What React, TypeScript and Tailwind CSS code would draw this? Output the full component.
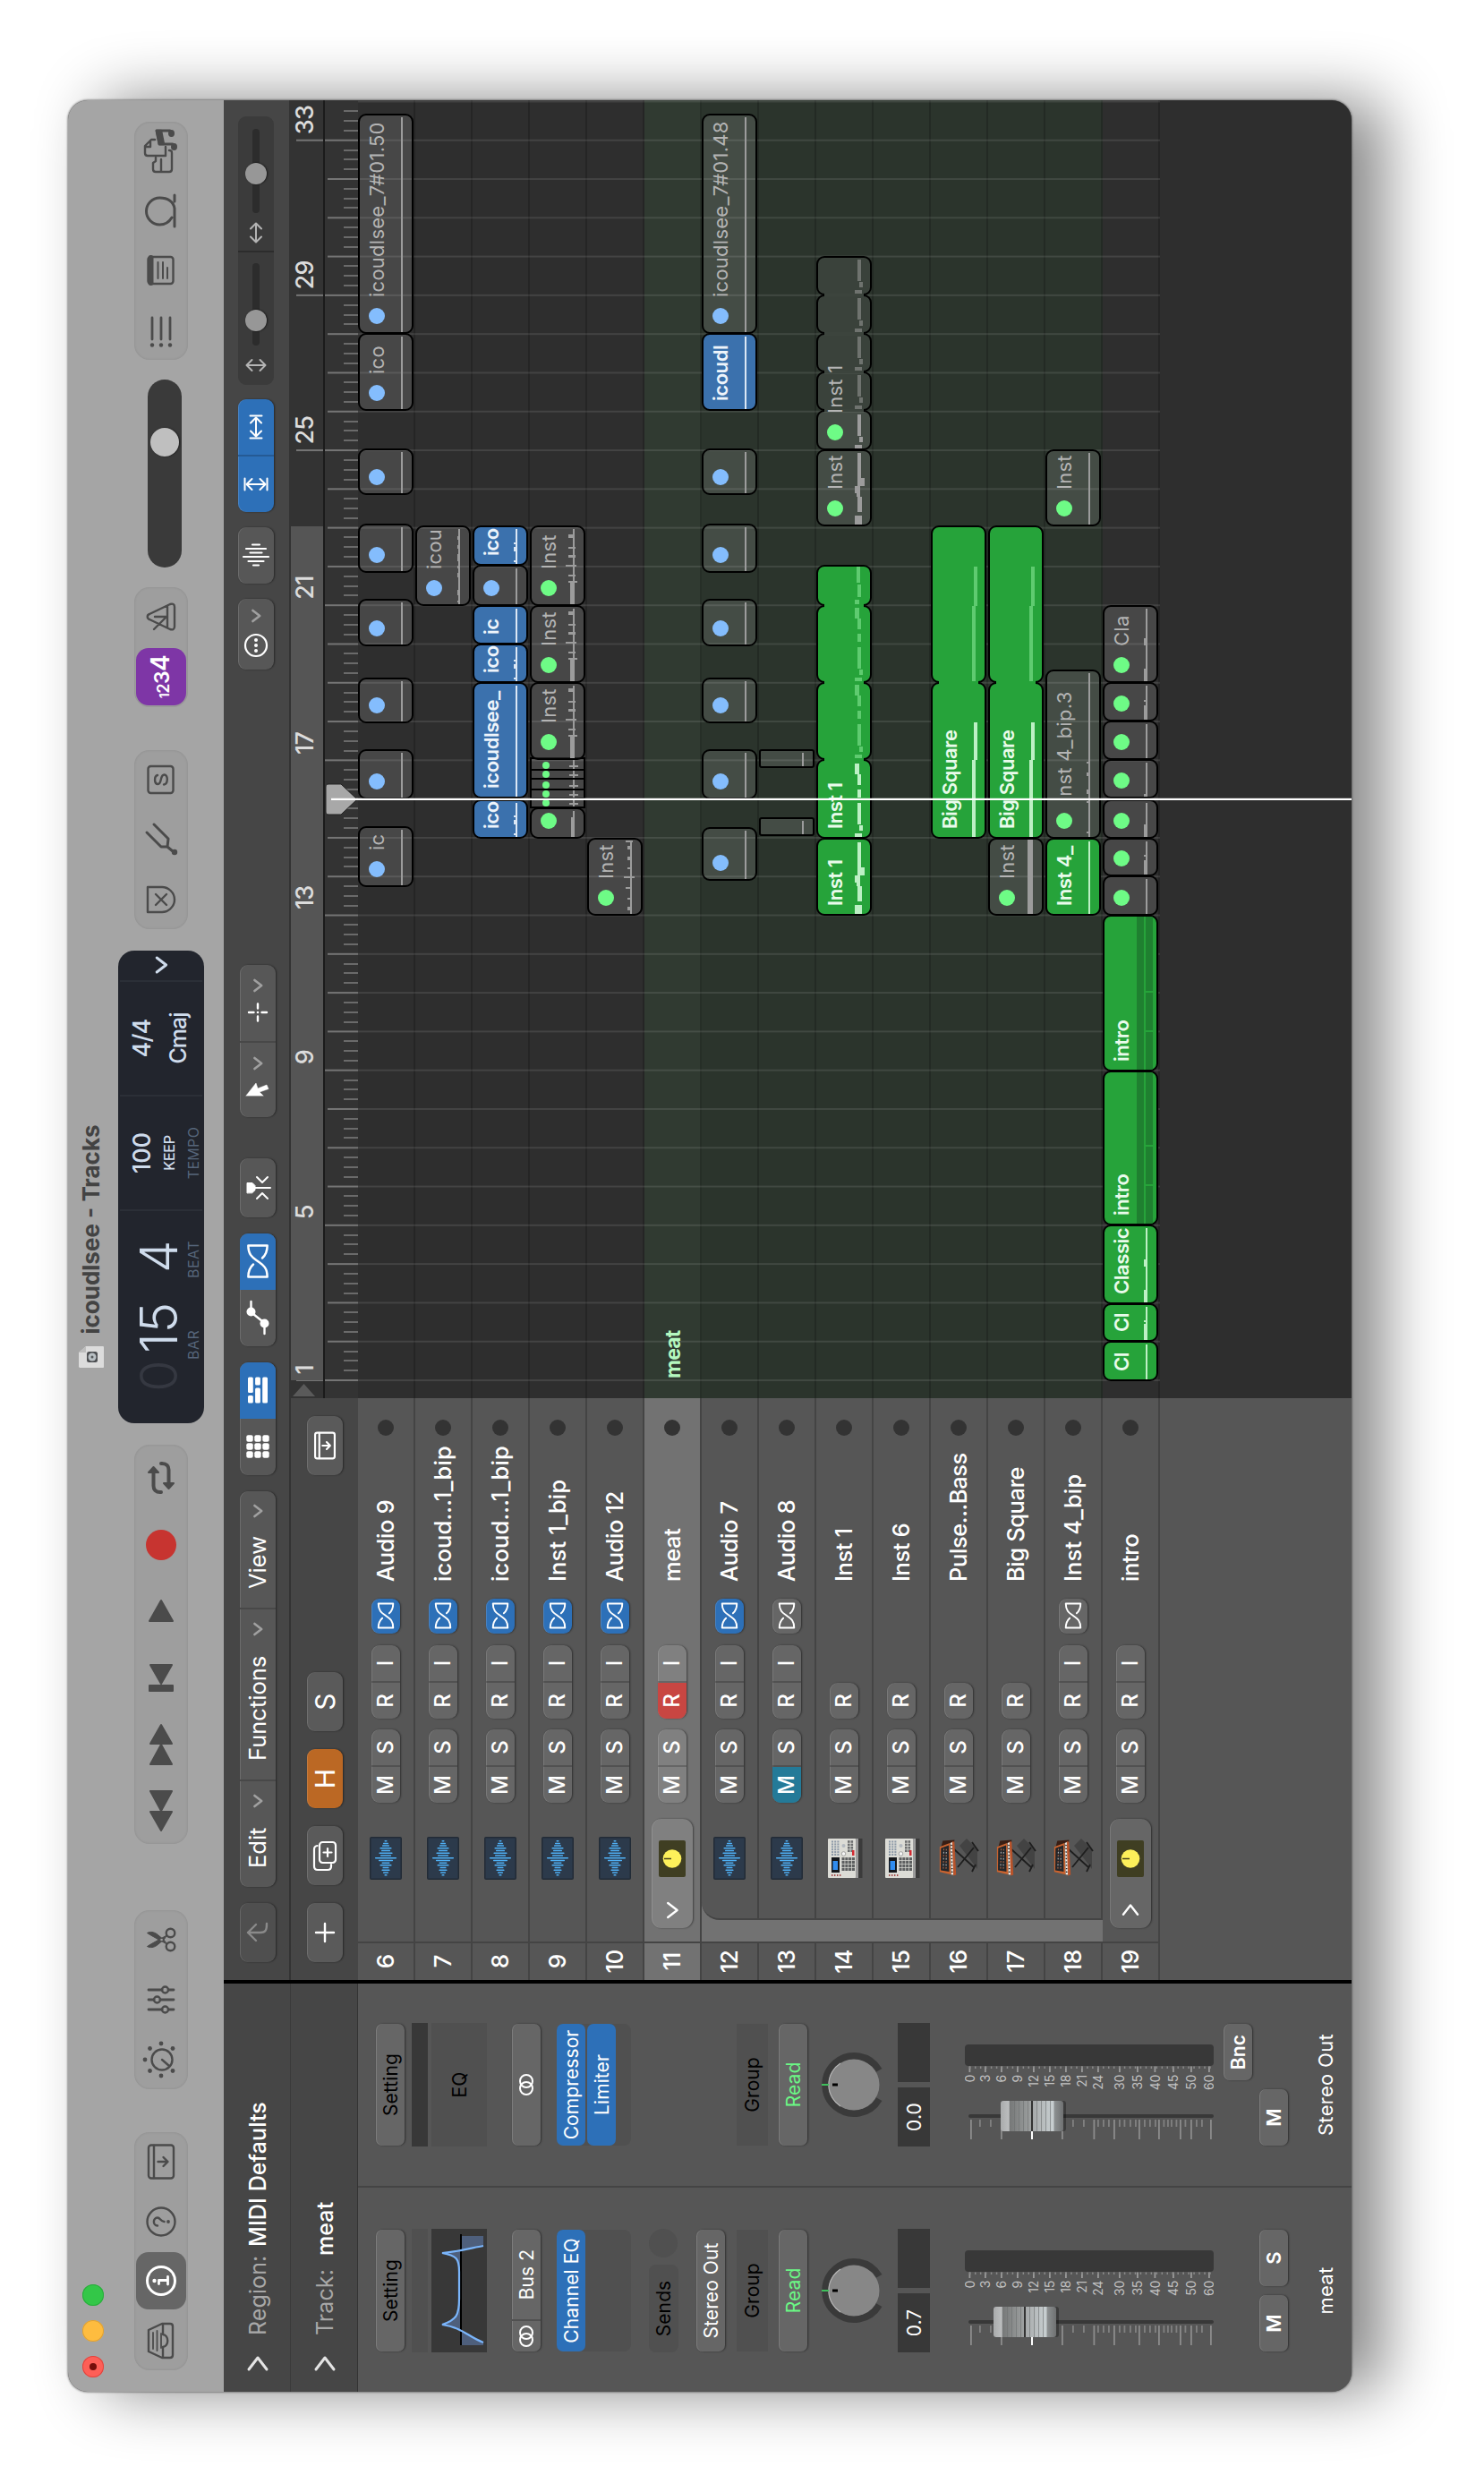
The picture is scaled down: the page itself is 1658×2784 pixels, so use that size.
import React from "react";
import type { ReactNode } from "react";

type Tone = "gray" | "blue" | "green";

const INK = "#4b4b4b";

/* ---------- icons ---------- */

function Icon({ size = 44, color = INK, sw = 2.4, children }: { size?: number; color?: string; sw?: number; children: ReactNode }) {
  return (
    <svg
      width={size}
      height={size}
      viewBox={`${-size / 2} ${-size / 2} ${size} ${size}`}
      fill="none"
      stroke={color}
      strokeWidth={sw}
      strokeLinecap="round"
      strokeLinejoin="round"
      className="shrink-0 overflow-visible"
    >
      {children}
    </svg>
  );
}

const Chevron = ({ dir = "down", color = "#a0a0a0", w = 7, sw = 2.6 }: { dir?: "down" | "right"; color?: string; w?: number; sw?: number }) => (
  <Icon size={w * 2 + 4} color={color} sw={sw}>
    {dir === "down" ? <path d={`M${-w} ${-w * 0.6}L0 ${w * 0.7}L${w} ${-w * 0.6}`} /> : <path d={`M${-w * 0.6} ${-w}L${w * 0.7} 0L${-w * 0.6} ${w}`} />}
  </Icon>
);

const FlexIcon = ({ s = 1 }: { s?: number }) => (
  <Icon size={34} color="#fff" sw={2}>
    <g transform={`scale(${s})`}>
      <path d="M-14 -8.5V8.5C-5 8.5 -3 4 0 0C3 -4 5 -8.5 14 -8.5V8.5C8 8.5 5 6.5 2.8 4M-14 -8.5C-8 -8.5 -5 -6.5 -2.8 -4" />
    </g>
  </Icon>
);

const LibraryIcon = () => (
  <Icon>
    <path d="M-19 1L-12 -14H12L19 1V10C19 12 18 13 16 13H-16C-18 13 -19 12 -19 10ZM-19 2H-7C-6 9 6 9 7 2H19" />
    <path d="M-9 -9H9M-11 -4.500H11M-8 0H8" strokeWidth={1.800} />
  </Icon>
);
const InfoIcon = () => (
  <Icon color="#fff" sw={3}>
    <circle r="15.5" />
    <path d="M-3.500 -2.500H.5V7M-4 7.500H4.500" strokeWidth={2.8} />
    <circle cy="-7.500" r="2.2" fill="#fff" stroke="none" />
  </Icon>
);
const HelpIcon = () => (
  <Icon>
    <circle r="15.500" />
    <path d="M-4.500 -4C-4.500 -9.500 4.500 -9.500 4.500 -4C4.500 -1 0 -.5 0 3.500" />
    <circle cy="8" r="1.900" fill={INK} stroke="none" />
  </Icon>
);
const PanelIcon = ({ color = INK, s = 1, sw = 2.4 }: { color?: string; s?: number; sw?: number }) => (
  <Icon color={color} sw={sw}>
    <g transform={`scale(${s})`}>
      <rect x="-18.500" y="-14" width="37" height="28" rx="3" />
      <path d="M-18 -8H18M0 -3.500V7M-5 2.500L0 7.500L5 2.500" />
    </g>
  </Icon>
);
const DialIcon = () => (
  <Icon>
    <circle cy="1" r="11.500" />
    <path d="M0 1L-7 9" />
    {[[0, -18], [-12.5, -12.5], [12.5, -12.5], [-18, 0], [18, 0], [-12.5, 13], [12.5, 13]].map(([x, y]) => (
      <circle key={`${x}${y}`} cx={x} cy={y} r="2.400" fill={INK} stroke="none" />
    ))}
  </Icon>
);
const MixerIcon = () => (
  <Icon>
    <path d="M-11 -14V1M-11 8.500V14M0 -14V-8M0 -1V14M11 -14V1M11 8.500V14" strokeWidth={2.8} />
    <circle cx="-11" cy="4.500" r="3.500" />
    <circle cy="-4.500" r="3.500" />
    <circle cx="11" cy="4.500" r="3.500" />
  </Icon>
);
const ScissorsIcon = () => (
  <Icon>
    <circle cx="-7.500" cy="10.500" r="4.800" />
    <circle cx="7.500" cy="10.500" r="4.800" />
    <path d="M-5 6.500L5 -11.500L7.500 -15.500C9.500 -12 8.500 -8 6.500 -5L0 3ZM5 6.500L-5 -11.500L-7.500 -15.500C-9.500 -12 -8.500 -8 -6.500 -5L0 3Z" fill={INK} strokeWidth={1} />
  </Icon>
);
const RewindIcon = () => (
  <Icon sw={2}>
    <path d="M-22 0L-1 -12V12ZM0 0L22 -12V12Z" fill={INK} />
  </Icon>
);
const ForwardIcon = () => (
  <Icon sw={2}>
    <path d="M22 0L1 -12V12ZM0 0L-22 -12V12Z" fill={INK} />
  </Icon>
);
const ToStartIcon = () => (
  <Icon sw={2}>
    <path d="M-7 0L14 -12V12Z" fill={INK} />
    <rect x="-15" y="-13" width="6" height="26" fill={INK} />
  </Icon>
);
const PlayIcon = () => (
  <Icon sw={2}>
    <path d="M12 0L-11 -13V13Z" fill={INK} />
  </Icon>
);
const CycleIcon = () => (
  <Icon sw={4}>
    <path d="M-16 0V-1C-16 -6 -13 -8.500 -9 -8.500H7M16 0V1C16 6 13 8.500 9 8.500H-7" />
    <path d="M6 -14L12 -8.500L6 -3ZM-6 14L-12 8.500L-6 3Z" fill={INK} strokeWidth={2} />
  </Icon>
);
const ReplaceIcon = () => (
  <Icon>
    <path d="M-14 -15H14V1C14 8 8 15 0 15C-8 15 -14 8 -14 1Z" />
    <path d="M-6 -6L6 6M6 -6L-6 6" />
  </Icon>
);
const ForkIcon = () => (
  <Icon sw={3}>
    <path d="M8 -16L-8 0V7L1 8L17 -8M-8 7L-13 13" />
    <circle cx="-14" cy="15" r="3.200" fill={INK} stroke="none" />
  </Icon>
);
const SoloIcon = () => (
  <Icon>
    <rect x="-15" y="-14.500" width="30" height="28" rx="3" />
    <path d="M5 -4C4 -8 -5 -8 -5 -3.500C-5 1 5.500 -1.500 5.500 3.500C5.500 8 -5 8 -5.500 3" />
  </Icon>
);
const MetronomeIcon = () => (
  <Icon>
    <path d="M-3 -13C-2 -16 2 -16 3 -13L14 10C15 13 14 15 11 15H-11C-14 15 -15 13 -14 10ZM-12 7H12M-14 -8L0 6M0 6V-7" />
  </Icon>
);
const ListIcon = () => (
  <Icon sw={2.800}>
    <path d="M-10 -10H14M-10 0H14M-10 10H14" />
    {[-10, 0, 10].map((y) => (
      <circle key={y} cx="-16.500" cy={y} r="2.200" fill={INK} stroke="none" />
    ))}
  </Icon>
);
const NotesIcon = () => (
  <Icon>
    <rect x="-15" y="-14.500" width="30" height="28" rx="3" />
    <path d="M-14 -11.500H14" strokeWidth={6} />
    <path d="M-9 -3.500H9M-9 2H9M-9 7H3" strokeWidth={2} />
  </Icon>
);
const LoopIcon = () => (
  <Icon sw={3}>
    <path d="M-17 15H3C11 14 15 7 15 -1.500C15 -10 8 -16.500 0 -16.500C-8 -16.500 -15 -10 -15 -1.500C-15 4 -12 9 -7 12M11 15H18" />
  </Icon>
);
const MediaIcon = () => (
  <Icon>
    <path d="M-7 -6H-11L-13 -9H-20C-22 -9 -23 -8 -23 -6V9C-23 11 -22 12 -20 12H-2C0 12 1 11 1 9M-22 0H-9" />
    <path d="M-5 5V-15C-5 -17 -4 -18 -2 -18H6L13 -11V-7M-5 5H5M5 -18V-12H12" />
    <path d="M8 13V-2L23 -5V10" strokeWidth={3} />
    <path d="M8 -2L23 -5V0L8 3Z" fill={INK} />
    <ellipse cx="5" cy="14.500" rx="4" ry="3.500" fill={INK} stroke="none" />
    <ellipse cx="20" cy="11.500" rx="4" ry="3.500" fill={INK} stroke="none" />
  </Icon>
);
const GridIcon = () => (
  <Icon color="#fff">
    {[-9, 0, 9].map((x) => [-9, 0, 9].map((y) => <rect key={`${x},${y}`} x={x - 3.700} y={y - 3.700} width="7.400" height="7.400" rx="2" fill="#fff" stroke="none" />))}
  </Icon>
);
const TracksIcon = () => (
  <Icon color="#fff">
    <g fill="#fff" stroke="none">
      <rect x="-14.500" y="-11" width="8.500" height="5.800" rx="1.500" />
      <rect x="-3" y="-11" width="17.500" height="5.800" rx="1.500" />
      <rect x="-14.500" y="-2.900" width="17" height="5.800" rx="1.500" />
      <rect x="5.500" y="-2.900" width="9" height="5.800" rx="1.500" />
      <rect x="-14.500" y="5.200" width="29" height="5.800" rx="1.500" />
    </g>
  </Icon>
);
const AutomationIcon = () => (
  <Icon color="#fff" sw={2.400}>
    <path d="M-18 7.500H-6L6 -7.500H18" />
    <circle cx="-6.500" cy="7.500" r="5" fill="#fff" stroke="none" />
    <circle cx="6.500" cy="-7.500" r="5" fill="#fff" stroke="none" />
  </Icon>
);
const CatchIcon = () => (
  <Icon color="#fff" sw={2}>
    <path d="M-5.500 -12H5.500V-6L2.500 -3H-2.500L-5.500 -6Z" fill="#fff" strokeWidth={1} />
    <path d="M0 -3V14M-12 -1L-6 5L-12 11M12 -1L6 5L12 11" />
  </Icon>
);
const PointerIcon = () => (
  <Icon color="#fff" sw={0.500}>
    <path d="M-6 -13L8 -2L2 0L6 10L1.500 12L-2 2L-6 6Z" fill="#fff" />
  </Icon>
);
const PlusCrossIcon = () => (
  <Icon color="#fff" sw={2.400}>
    <path d="M0 -10V-4.500M0 4.500V10M-9.500 0H-4.500M4.500 0H9.500" />
    <circle r="1.300" fill="#fff" stroke="none" />
  </Icon>
);
const DotsIcon = () => (
  <Icon color="#fff" sw={2.200}>
    <circle r="12" />
    {[-6, 0, 6].map((x) => (
      <circle key={x} cx={x} r="2" fill="#fff" stroke="none" />
    ))}
  </Icon>
);
const WaveIcon = () => (
  <Icon color="#fff" sw={2.200}>
    <path d="M-11.500 -3V3M-7 -8.500V8.500M-2 -14V14M2.500 -6.500V6.500M7 -11V11M11.500 -4V4" />
  </Icon>
);
const ArrowsIcon = ({ vertical, ends, color = "#fff" }: { vertical?: boolean; ends?: boolean; color?: string }) => (
  <Icon color={color} sw={2}>
    <g transform={vertical ? "rotate(90)" : undefined}>
      <path d="M-10 0H10M-4.500 -6L-10.500 0L-4.500 6M4.500 -6L10.500 0L4.500 6" />
      {ends && <path d="M-12.500 -6.500V6.500M12.500 -6.500V6.500" />}
    </g>
  </Icon>
);
const StereoIcon = () => (
  <Icon size={28} color="#fff" sw={2}>
    <circle cx="-4" r="7" />
    <circle cx="4" r="7" />
  </Icon>
);

/* ---------- toolbar ---------- */

function Group({ w, children }: { w: string; children: ReactNode }) {
  return <div className={`flex h-[60px] items-center justify-around rounded-[17px] bg-[#9e9e9e] shadow-[inset_0_0_3px_rgba(0,0,0,0.12)] ${w}`}>{children}</div>;
}

function Lcd() {
  return (
    <div className="mx-6 flex h-24 w-[528px] rounded-[18px] bg-[#22252d] py-0.5 text-[#cfdcec]">
      <div className="flex w-[239px] flex-col border-r-2 border-[#2b2f37] pl-[35px]">
        <div className="mt-[14px] flex text-[58px] leading-[58px] font-light">
          <span className="w-[43px] text-[#353841]">0</span>
          <span className="w-[90px]">15</span>
          <span>4</span>
        </div>
        <div className="flex text-[16px] leading-[20px] tracking-[0.500px] text-[#56657a]">
          <span className="ml-9 w-[91px]">BAR</span>
          <span>BEAT</span>
        </div>
      </div>
      <div className="flex w-[128px] flex-col items-center border-r-2 border-[#2b2f37]">
        <span className="mt-[10px] text-[27px] leading-[30px] font-medium">100</span>
        <span className="mt-[5px] text-[16px] leading-[20px] font-medium tracking-[-0.300px]">KEEP</span>
        <span className="mt-[7px] text-[16px] leading-[20px] tracking-[0.300px] text-[#56657a]">TEMPO</span>
      </div>
      <div className="flex w-[128px] flex-col items-center border-r-2 border-[#2b2f37]">
        <span className="mt-[10px] text-[27px] leading-[30px] font-medium tracking-[-0.800px]">4/4</span>
        <span className="mt-[10px] text-[25px] leading-[30px] font-medium tracking-[-1px]">Cmaj</span>
      </div>
      <div className="flex flex-1 items-center justify-center">
        <Chevron color="#cfdcec" w={8} sw={3} />
      </div>
    </div>
  );
}

function Toolbar() {
  return (
    <header className="flex h-[174px] flex-col bg-[#a5a5a5]">
      <div className="grid h-[56px] grid-cols-[1fr_auto_1fr] items-center">
        <div className="flex gap-4 pl-4">
          <span className="flex size-6 items-center justify-center rounded-full bg-[#fe5f57] ring-1 ring-[#e0443e] ring-inset">
            <span className="size-2 rounded-full bg-[#760e0a]" />
          </span>
          <span className="size-6 rounded-full bg-[#febc3f] ring-1 ring-[#dea035] ring-inset" />
          <span className="size-6 rounded-full bg-[#33c748] ring-1 ring-[#2aab3c] ring-inset" />
        </div>
        <div className="-mt-1 flex items-center gap-[13px]">
          <svg width="24" height="28" viewBox="0 0 24 28">
            <path d="M1 0H17L24 8V27C24 28 23 28 23 28H1C0 28 0 27 0 27V1Z" fill="#dcdcdc" />
            <path d="M17 0V8H24Z" fill="#bdbdbd" />
            <rect x="6" y="9" width="12" height="12" rx="2.500" fill="#4d4f52" />
            <circle cx="12" cy="15" r="4.500" fill="#b9c0c4" />
            <circle cx="12" cy="15" r="1.500" fill="#55595c" />
          </svg>
          <h1 className="text-[26px] leading-8 font-bold text-[#434343]">icoudlsee - Tracks</h1>
        </div>
        <div />
      </div>
      <div className="flex h-24 items-center px-6">
        <Group w="w-[266px]">
          <LibraryIcon />
          <span className="-mx-2.5 flex h-14 w-16 items-center justify-center rounded-[14px] bg-[#666]">
            <InfoIcon />
          </span>
          <HelpIcon />
          <PanelIcon />
        </Group>
        <div className="w-12" />
        <Group w="w-[200px]">
          <DialIcon />
          <MixerIcon />
          <ScissorsIcon />
        </Group>
        <div className="w-[74px]" />
        <Group w="w-[446px]">
          <RewindIcon />
          <ForwardIcon />
          <ToStartIcon />
          <PlayIcon />
          <span className="mx-[5px] size-[34px] rounded-full bg-[#c73430]" />
          <CycleIcon />
        </Group>
        <Lcd />
        <Group w="w-[200px]">
          <ReplaceIcon />
          <ForkIcon />
          <SoloIcon />
        </Group>
        <div className="w-12" />
        <div className="flex h-[60px] w-[134px] items-center rounded-[17px] bg-[#9e9e9e] pl-0.5 shadow-[inset_0_0_3px_rgba(0,0,0,0.12)]">
          <span className="flex h-14 w-16 items-baseline justify-center rounded-[14px] bg-[#7e36a6] pt-[13px] leading-[28px] font-semibold tracking-[-0.500px] text-white">
            <span className="text-[14px]">1</span>
            <span className="text-[18px]">2</span>
            <span className="text-[23px]">3</span>
            <span className="text-[28px]">4</span>
          </span>
          <span className="ml-[13px] flex">
            <MetronomeIcon />
          </span>
        </div>
        <div className="mt-2 mr-[22px] ml-[22px] flex h-[38px] w-[210px] items-center rounded-full bg-[#3a3a3a] pl-[124px]">
          <span className="size-8 rounded-full bg-[#bfbfbf] shadow-[0_1px_2px_rgba(0,0,0,0.5)]" />
        </div>
        <Group w="w-[266px]">
          <ListIcon />
          <NotesIcon />
          <LoopIcon />
          <MediaIcon />
        </Group>
      </div>
    </header>
  );
}

/* ---------- menu bar ---------- */

const BTN = "flex items-center justify-center rounded-[9px] shadow-[0_1px_2px_rgba(0,0,0,0.45),inset_0_1px_0_rgba(255,255,255,0.13)]";

function MenuBar() {
  return (
    <div className="flex h-[75px] items-center border-b-2 border-[#333] bg-[#464646] pt-[3px] pl-5 text-[25.500px] text-white">
      <div className={`${BTN} h-10 w-[66px] bg-[#4f4f4f]`}>
        <Icon color="#8a8a8a" size={36}>
          <path d="M-9 -2L0 -11L9 -2M0 -11V3C0 9 3 10 10 10" />
        </Icon>
      </div>
      <div className={`${BTN} ml-[18px] h-10 w-[442px] bg-[#575757]`}>
        <span className="flex h-full w-[120px] items-center justify-between border-r-2 border-[#484848] pr-3.5 pl-[21px]">
          Edit <Chevron w={6} />
        </span>
        <span className="flex h-full w-[192px] items-center justify-between border-r-2 border-[#484848] pr-3.5 pl-[21px]">
          Functions <Chevron w={6} />
        </span>
        <span className="flex h-full flex-1 items-center justify-between pr-3.5 pl-[21px]">
          View <Chevron w={6} />
        </span>
      </div>
      <div className={`${BTN} ml-[18px] h-10 w-[126px] overflow-hidden bg-[#575757]`}>
        <span className="flex flex-1 justify-center"><GridIcon /></span>
        <span className="flex h-full flex-1 items-center justify-center bg-[#2d70b8]"><TracksIcon /></span>
      </div>
      <div className={`${BTN} ml-[18px] h-10 w-[126px] overflow-hidden bg-[#575757]`}>
        <span className="flex flex-1 justify-center"><AutomationIcon /></span>
        <span className="flex h-full flex-1 items-center justify-center bg-[#2d70b8]"><FlexIcon s={1.25} /></span>
      </div>
      <div className={`${BTN} ml-[18px] h-10 w-[66px] bg-[#575757]`}>
        <CatchIcon />
      </div>
      <div className={`${BTN} ml-[46px] h-10 w-[170px] bg-[#575757]`}>
        <span className="flex h-full flex-1 items-center border-r-2 border-[#484848] pl-2">
          <PointerIcon />
          <Chevron w={6} />
        </span>
        <span className="flex h-full flex-1 items-center pl-[10px]">
          <PlusCrossIcon />
          <Chevron w={6} />
        </span>
      </div>
      <div className={`${BTN} mt-[-4px] ml-auto h-10 w-[79px] justify-start! bg-[#575757] pl-[5px]`}>
        <DotsIcon />
        <span className="ml-[3px]"><Chevron w={6} /></span>
      </div>
      <div className={`${BTN} mt-[-4px] ml-[17px] h-10 w-[63px] bg-[#575757]`}>
        <WaveIcon />
      </div>
      <div className={`${BTN} mt-[-4px] ml-[17px] h-10 w-[126px] bg-[#2d70b8]`}>
        <span className="flex h-full flex-1 items-center justify-center border-r-2 border-[#255a94]"><ArrowsIcon vertical ends /></span>
        <span className="flex flex-1 justify-center"><ArrowsIcon ends /></span>
      </div>
      <div className="mt-[-4px] mr-[18px] ml-4 flex h-10 w-[300px] items-center rounded-[9px] bg-[#3b3b3b]">
        <div className="flex h-full w-[150px] items-center border-r-2 border-[#2c2c2c]">
          <ArrowsIcon vertical color="#b4b4b4" />
          <span className="flex h-2 w-[92px] items-center rounded-full bg-[#2c2c2c] pl-4">
            <span className="size-6 shrink-0 rounded-full bg-[#979797] shadow-[0_1px_2px_rgba(0,0,0,0.6)]" />
          </span>
        </div>
        <span className="-ml-0.5 flex"><ArrowsIcon color="#b4b4b4" /></span>
        <span className="flex h-2 w-[94px] items-center rounded-full bg-[#2c2c2c] pl-8">
          <span className="size-6 shrink-0 rounded-full bg-[#979797] shadow-[0_1px_2px_rgba(0,0,0,0.6)]" />
        </span>
      </div>
    </div>
  );
}

/* ---------- inspector ---------- */

const METER: [string, number][] = [
  ["0", 5.5], ["3", 23], ["6", 41], ["9", 59], ["12", 77], ["15", 95], ["18", 113], ["21", 131],
  ["24", 149], ["30", 173], ["35", 193], ["40", 212.5], ["45", 233], ["50", 253], ["60", 273],
];
const LONG = [7, 41, 109, 144.5, 167, 195, 217, 241, 253, 275];
const SHORT = [17, 29, 53, 64, 86, 98, 121, 133, 149, 155, 161, 173, 178.5, 185, 191, 201, 207, 213, 222.500, 227, 231, 236.500, 246.5, 259, 265];

function Fader({ cap }: { cap: number }) {
  return (
    <svg width="138" height="278" viewBox="0 0 138 278" className="mt-[38px] shrink-0" fontFamily="Inter" fontSize="14">
      <defs>
        <linearGradient id="cap" x1="0" y1="0" x2="0" y2="1">
          <stop offset="0" stopColor="#a9abac" /><stop offset=".13" stopColor="#bcbebf" /><stop offset=".15" stopColor="#777979" />
          <stop offset=".48" stopColor="#9da0a0" /><stop offset=".52" stopColor="#a7aaab" /><stop offset=".84" stopColor="#c8cfd1" />
          <stop offset=".86" stopColor="#8c9091" /><stop offset="1" stopColor="#6f7172" />
        </linearGradient>
      </defs>
      <rect x="32" y="4" width="4" height="274" rx="2" fill="#383838" />
      {LONG.map((y) => <rect key={y} x="8" y={y - 1} width="22" height="1.800" fill="#8c8c8c" />)}
      {SHORT.map((y) => <rect key={y} x="22" y={y - 1} width="8" height="1.800" fill="#808080" />)}
      <rect x="8" y="74" width="22" height="2" fill="#fff" />
      <rect x="17" y={cap + 3} width="34" height="70" rx="3" fill="#000" opacity=".3" />
      <rect x="17" y={cap} width="34" height="70" rx="3" fill="url(#cap)" />
      {[15, 20, 25, 30, 40, 45, 50, 55].map((o) => <rect key={o} x="17" y={cap + o} width="34" height="1" fill="#6d6f70" opacity=".6" />)}
      <rect x="17" y={cap + 34} width="34" height="2" fill="#333" />
      {METER.map(([t, y]) => (
        <g key={t}>
          <text x="80" y={y + 5} textAnchor="end" fill="#c2c2c2" letterSpacing="-.3">{t}</text>
          <rect x="83" y={y - 1} width="6.500" height="1.800" fill="#9a9a9a" />
        </g>
      ))}
      {Array.from({ length: 46 }, (_, i) => <rect key={i} x="87" y={5 + i * 5.960} width="2.500" height="1.500" fill="#8a8a8a" />)}
      <rect x="90" y="0" width="24" height="278" rx="4" fill="#383838" />
    </svg>
  );
}

function Knob() {
  return (
    <svg width="76" height="66" viewBox="-38 -35 76 66" className="mt-[17px] shrink-0 overflow-visible">
      <path d="M-16 28A32 32 0 1 1 16 28" fill="none" stroke="#3a3a3a" strokeWidth="8" />
      <circle r="28.500" fill="#878787" />
      <path d="M-24 -15A28.500 28.500 0 0 1 24 -15" fill="none" stroke="#b5b5b5" strokeWidth="1.200" />
      <rect x="-1" y="-36" width="2" height="8" fill="#3fbf5c" />
      <rect x="-1.500" y="-24" width="3" height="6" fill="#000" />
    </svg>
  );
}

const SLOT = "flex items-center justify-center";
const SBTN = "flex items-center justify-center rounded-[7px] bg-[#666] shadow-[0_1px_2px_rgba(0,0,0,0.45),inset_0_1px_0_rgba(255,255,255,0.15)]";

function Strip({ master }: { master?: boolean }) {
  return (
    <div className={`flex flex-col items-center pt-5 text-[21px] tracking-[0.100px] text-white ${master ? "w-[226px]" : "w-[230px] border-r-2 border-[#444] pr-0.5"}`}>
      <div className={`${SBTN} h-8 w-[136px] shrink-0 text-black`}>Setting</div>
      <div className={`mt-2 h-[18px] w-[138px] shrink-0 ${master ? "bg-[#383838]" : "bg-[#505050]"}`} />
      <div className={`${SLOT} mt-1 h-[62px] w-[138px] shrink-0 ${master ? "bg-[#505050] text-black" : "bg-[#383838]"}`}>
        {master ? (
          "EQ"
        ) : (
          <svg width="138" height="62" viewBox="0 0 138 62">
            <path d="M8 33V58H11C18 40 27 36 31 12C36 28 42 31 60 31H90C105 31 108 28 111 12C113 34 117 46 119 58H130V33Z" fill="#4e5f7c" />
            <path d="M8 33H132" stroke="#000" strokeWidth="2" />
            <path d="M11 58C18 40 27 36 31 12C36 28 42 31 60 31H90C105 31 108 28 111 12C113 34 117 46 119 58" fill="none" stroke="#7ab5fb" strokeWidth="2.200" />
          </svg>
        )}
      </div>
      <div className={`${SBTN} mt-[28px] h-8 w-[136px] shrink-0`}>
        {master ? (
          <StereoIcon />
        ) : (
          <>
            <span className="flex h-full w-[36px] items-center justify-center border-r-2 border-[#505050]"><StereoIcon /></span>
            <span className="flex-1 text-center">Bus 2</span>
          </>
        )}
      </div>
      <div className="mt-[18px] flex h-[83px] w-[136px] shrink-0 flex-col gap-0.5 rounded-lg bg-[#505050]">
        <div className={`${SLOT} h-8 rounded-[7px] bg-[#2d70b8]`}>{master ? "Compressor" : "Channel EQ"}</div>
        {master && <div className={`${SLOT} h-8 rounded-[7px] bg-[#2d70b8]`}>Limiter</div>}
      </div>
      {master ? (
        <div className="h-[106px] shrink-0" />
      ) : (
        <>
          <div className="mt-5 flex h-[33px] w-[138px] shrink-0 justify-between text-black">
            <span className={`${SLOT} w-[98px] rounded-lg bg-[#505050]`}>Sends</span>
            <span className="size-8 rounded-full bg-[#505050]" />
          </div>
          <div className={`${SBTN} mt-5 mb-px h-8 w-[136px] shrink-0`}>Stereo Out</div>
        </>
      )}
      <div className={`${SLOT} mt-3 h-[35px] w-[136px] shrink-0 bg-[#505050] text-black`}>Group</div>
      <div className={`${SBTN} mt-3 h-8 w-[136px] shrink-0 text-[#6bf785]`}>Read</div>
      <Knob />
      <div className="mt-[18px] mb-px flex h-9 w-[138px] shrink-0 justify-between">
        <span className={`${SLOT} w-[66px] bg-[#383838]`}>{master ? "0.0" : "0.7"}</span>
        <span className="w-[66px] bg-[#383838]" />
      </div>
      <Fader cap={master ? 40 : 32} />
      <div className="mt-[11px] flex h-8 w-[136px] shrink-0 justify-end">
        {master && <span className={`${SBTN} w-[63px] font-semibold`}>Bnc</span>}
      </div>
      <div className="mt-2 flex h-8 w-[136px] shrink-0 justify-between text-[22px] font-semibold">
        <span className={`${SBTN} w-[63px]`}>M</span>
        {!master && <span className={`${SBTN} w-[63px]`}>S</span>}
      </div>
      <div className="mt-[29px] text-[22px] leading-[26px] tracking-[0.300px]">{master ? "Stereo Out" : "meat"}</div>
    </div>
  );
}

function Inspector() {
  return (
    <aside className="flex w-[460px] shrink-0 flex-col border-r-4 border-black bg-[#565656] text-[25px] tracking-[0.100px] text-white">
      <div className="flex h-[75px] items-center border-b border-[#3a3a3a] bg-[#464646] pt-0.5 pl-[19px]">
        <Chevron dir="right" color="#e4e4e4" w={10} sw={3} />
        <span className="ml-[20px] w-[99px] text-[#a8a8a8]">Region:</span>
        <span className="font-medium">MIDI Defaults</span>
      </div>
      <div className="flex h-[75px] items-center border-b border-[#333] bg-[#464646] pt-0.5 pl-[19px]">
        <Chevron dir="right" color="#e4e4e4" w={10} sw={3} />
        <span className="ml-[20px] w-[89px] text-[#a8a8a8]">Track:</span>
        <span className="font-medium">meat</span>
      </div>
      <div className="flex flex-1">
        <Strip />
        <Strip master />
      </div>
    </aside>
  );
}

/* ---------- track list ---------- */

type Kind = "audio" | "folder-open" | "folder" | "mpc" | "synth";
interface Track {
  n: number;
  name: string;
  kind: Kind;
  flex?: "on" | "off";
  input?: boolean;
  nested?: boolean;
}

const TRACKS: Track[] = [
  { n: 6, name: "Audio 9", kind: "audio", flex: "on", input: true },
  { n: 7, name: "icoud...1_bip", kind: "audio", flex: "on", input: true },
  { n: 8, name: "icoud...1_bip", kind: "audio", flex: "on", input: true },
  { n: 9, name: "Inst 1_bip", kind: "audio", flex: "on", input: true },
  { n: 10, name: "Audio 12", kind: "audio", flex: "on", input: true },
  { n: 11, name: "meat", kind: "folder-open", input: true },
  { n: 12, name: "Audio 7", kind: "audio", flex: "on", input: true, nested: true },
  { n: 13, name: "Audio 8", kind: "audio", flex: "off", input: true, nested: true },
  { n: 14, name: "Inst 1", kind: "mpc", nested: true },
  { n: 15, name: "Inst 6", kind: "mpc", nested: true },
  { n: 16, name: "Pulse...Bass", kind: "synth", nested: true },
  { n: 17, name: "Big Square", kind: "synth", nested: true },
  { n: 18, name: "Inst 4_bip", kind: "synth", flex: "off", input: true, nested: true },
  { n: 19, name: "intro", kind: "folder", input: true },
];

const AudioArt = () => (
  <svg width="48" height="36" viewBox="0 0 48 36" className="shrink-0">
    <rect width="48" height="36" rx="2" fill="#222b36" />
    <rect x="1.500" y="1.500" width="45" height="33" fill="#2c3a4b" />
    {[1.5, 3, 4.5, 3.5, 6.5, 4.5, 8, 12, 6, 7.5, 5, 6.5, 4, 3, 1.5].map((h, i) => (
      <rect key={i} x={4.500 + i * 2.720} y={18 - h} width="1.500" height={h * 2} rx=".6" fill="#4fb0f5" />
    ))}
  </svg>
);
const MpcArt = () => (
  <svg width="48" height="40" viewBox="0 0 48 40" className="mt-1 shrink-0">
    <path d="M2 33H46V38.500H2Z" fill="#3b3b3b" />
    <path d="M2 30H46V34H2Z" fill="#9b9b9b" />
    <rect x="2" y="0" width="44" height="31" rx="1" fill="#dcdcd6" />
    <rect x="8" y="4" width="17" height="9" fill="#15181c" />
    <rect x="11" y="5.500" width="10" height="5.500" fill="#2f8cf0" />
    {[0, 1, 2, 3].map((x) => [0, 1, 2, 3].map((y) => <rect key={`${x}${y}`} x={10 + x * 3.900} y={15.500 + y * 3.800} width="3.200" height="3.100" fill="#5d5f60" />))}
    {[0, 1, 2, 3, 4, 5].map((x) => [0, 1, 2].map((y) => <rect key={`${x}${y}`} x={27 + x * 2.900} y={4 + y * 3.200} width="2" height="2" fill="#8d9aa8" />))}
    {[0, 1, 2, 3].map((x) => [0, 1].map((y) => <rect key={`${x}${y}`} x={31 + x * 3.400} y={22 + y * 3.500} width="2.600" height="2.600" fill="#6b6d6e" />))}
    <circle cx="29" cy="17.500" r="2.300" fill="#f6f6f6" stroke="#777" strokeWidth=".6" />
    <circle cx="38" cy="17.500" r="2" fill="#b3b9c0" />
    <rect x="27" y="27" width="6" height="2.500" fill="#d42a32" />
    {[2, 5, 8, 11].map((y) => <rect key={y} x="4" y={y + 2} width="2" height="1.400" fill="#a34b4b" />)}
  </svg>
);
const SynthArt = () => (
  <svg width="48" height="48" viewBox="0 0 48 48" className="mt-[2px] shrink-0">
    <path d="M12 44L38 24L46 32L34 44Z" fill="#000" opacity=".22" />
    <path d="M14 22L36 40M34 18L14 40M9 38L17 42M32 45L42 38" stroke="#1e1e1e" strokeWidth="1.800" fill="none" />
    <g transform="rotate(4 24 12)">
      <path d="M33 2L43 4L45 17L36 16Z" fill="#3a1e14" />
      <path d="M8 3L36 1L41 12L6 16Z" fill="#c9632f" />
      <path d="M10 4L34.500 2.500L38.500 11L9 13.500Z" fill="#23262a" />
      {[0, 1, 2, 3, 4, 5, 6].map((i) => <path key={i} d={`M${12 + i * 3.400} ${6.700 - i * 0.150}h1.800M${12 + i * 3.400} ${9.800 - i * 0.200}h1.800`} stroke={i % 2 ? "#b8b8b8" : "#b06a4c"} strokeWidth="1.100" />)}
      <path d="M6 16L41 12.500L42.500 15L6 19Z" fill="#e9e6e0" />
      {[0, 1, 2, 3, 4, 5, 6, 7, 8].map((i) => <path key={i} d={`M${9 + i * 3.700} ${16 - i * 0.350}v1.600`} stroke="#222" strokeWidth="1.300" />)}
      <path d="M5 18.500L43 14.500V17L6 21.500Z" fill="#b9532a" />
    </g>
  </svg>
);

function FolderArt({ open }: { open?: boolean }) {
  return (
    <div className={`${BTN} h-[46px] w-[122px] justify-between! rounded-[11px]! pr-6 pl-[10px] ${open ? "bg-[#808080]" : "bg-[#666]"}`}>
      <Chevron dir={open ? "down" : "right"} color="#fff" w={8} sw={2.400} />
      <svg width="41" height="30" viewBox="0 0 41 30">
        <rect width="41" height="30" rx="2" fill="#3f3e22" />
        <circle cx="20.500" cy="15" r="10.300" fill="#fdf05a" />
        <path d="M20.500 6V14" stroke="#4a461c" strokeWidth="1.500" />
      </svg>
    </div>
  );
}

function Pair({ items, sel, tint }: { items: [string, string?]; sel?: boolean; tint?: string }) {
  const [a, b] = items;
  return (
    <div className="flex w-[82px] shrink-0">
      <div className={`${BTN} h-8 overflow-hidden ${b ? "w-[82px]" : "w-10"} ${sel ? "bg-[#808080]" : "bg-[#666]"}`}>
        <span className={`flex h-full flex-1 items-center justify-center ${tint ?? ""}`}>{a}</span>
        {b && <span className="flex h-full flex-1 items-center justify-center border-l-2 border-black/20">{b}</span>}
      </div>
    </div>
  );
}

function TrackRow({ t }: { t: Track }) {
  const sel = t.kind === "folder-open";
  const folder = sel || t.kind === "folder";
  return (
    <div className={`flex h-16 text-white ${sel ? "bg-[#727272]" : ""}`}>
      <div className="flex w-[41px] shrink-0 items-center justify-center border-b-2 border-[#444] text-[26px] font-medium tracking-[-0.700px]">{t.n}</div>
      <div className={`flex flex-1 border-l-2 border-[#444] ${t.nested ? "bg-[#727272] pl-6" : ""}`}>
        <div
          className={`flex flex-1 items-center border-b-2 border-[#444] ${t.nested ? "border-l-2 bg-[#565656]" : ""} ${t.n === 12 ? "rounded-tl-[20px]" : ""} ${folder ? "pl-[15px]" : t.nested ? "pl-[43px]" : "pl-[69px]"}`}
        >
          {t.kind === "audio" && <AudioArt />}
          {t.kind === "mpc" && <MpcArt />}
          {t.kind === "synth" && <SynthArt />}
          {folder && <FolderArt open={sel} />}
          <div className={`flex items-center gap-3 text-[24px] font-medium ${folder ? "ml-[18px]" : "ml-[38px]"}`}>
            <Pair items={["M", "S"]} sel={sel} tint={t.n === 13 ? "bg-[#247a98]" : undefined} />
            <Pair items={t.input ? ["R", "I"] : ["R"]} sel={sel} tint={sel ? "bg-[#c84642]" : undefined} />
          </div>
          <div className={`ml-[13px] h-8 w-[39px] shrink-0 ${t.flex ? BTN : ""} ${t.flex === "on" ? "bg-[#2d70b8]" : t.flex ? "bg-[#666]" : ""}`}>{t.flex && <FlexIcon s={0.97} />}</div>
          <div className={`ml-[19px] w-[163px] text-[25.500px] font-medium whitespace-nowrap ${t.name.includes("_") ? "tracking-[0.150px]" : "tracking-[-0.400px]"}`}>{t.name}</div>
          <div className="size-[18px] rounded-full bg-[#333]" />
        </div>
      </div>
    </div>
  );
}

function TrackPanel() {
  return (
    <div className="flex w-[650px] shrink-0 flex-col bg-[#565656]">
      <div className="flex h-[75px] items-center gap-5 bg-[#464646] pr-5 pl-5 text-[30px] text-white">
        <span className={`${BTN} h-10 w-[66px] bg-[#5a5a5a]`}>
          <Icon color="#fff" sw={2.400}><path d="M-10 0H10M0 -10V10" /></Icon>
        </span>
        <span className={`${BTN} h-10 w-[66px] bg-[#5a5a5a]`}>
          <Icon color="#fff" sw={2.200}>
            <rect x="-8" y="-6" width="23" height="18" rx="3.500" />
            <path d="M-10 7H-12C-14 7 -16 6 -16 3V-8C-16 -11 -14 -12 -12 -12H7C9 -12 11 -10.500 11 -8.500M3.500 -1.500V7.500M-1 3H8" />
          </Icon>
        </span>
        <span className={`${BTN} h-10 w-[66px] bg-[#bb6824]`}>H</span>
        <span className={`${BTN} h-10 w-[66px] bg-[#5a5a5a]`}>S</span>
        <span className={`${BTN} ml-auto h-10 w-[66px] bg-[#5a5a5a]`}>
          <PanelIcon color="#fff" s={0.780} sw={2.800} />
        </span>
      </div>
      {TRACKS.map((t) => <TrackRow key={t.n} t={t} />)}
    </div>
  );
}

/* ---------- arrangement ---------- */

const BAR = 43.290;
const ORIGIN = 20;

interface Clip {
  x: number;
  w: number;
  tone: Tone;
  label?: string;
  loop?: boolean;
  tiny?: boolean;
  bare?: boolean;
  spill?: boolean;
  wave?: number[][];
}

const c = (x: number, w: number, tone: Tone, label?: string, extra: Partial<Clip> = {}): Clip => ({ x, w, tone, label, ...extra });

/* wave entries: x, y, width, height inside the clip */
const hits = [[0, 45, 26, 3], [24, 43, 2, 10], [31, 43, 2, 8], [42, 40, 2, 12], [52, 43, 3, 8], [62, 43, 2, 8], [74, 43, 4, 5]];
const notes = [[0, 43, 10, 8], [14, 46, 17, 5], [31, 45, 4, 4], [35, 43, 8, 6], [43, 46, 9, 8], [52, 46, 28, 4]];
const riff = [[0, 43, 4, 8], [7, 48, 6, 4], [14, 46, 24, 4], [44, 46, 9, 4], [58, 46, 12, 4], [70, 43, 12, 5]];
const bass = [[0, 46, 86, 4], [86, 48, 42, 4]];
const loopBass = [[0, 46, 84, 4], [84, 48, 44, 4]];
const blips = [[2, 44, 2, 3], [14, 44, 5, 3], [22, 44, 2, 4]];

const small = [c(669, 55, "gray"), c(754, 50, "gray"), c(840, 52, "gray"), c(922, 54, "gray"), c(1009, 51, "gray")];

const CLIPS: Record<number, Clip[]> = {
  6: [c(571, 67, "gray", "ic"), ...small, c(1103, 86, "gray", "ico"), c(1189, 245, "gray", "icoudlsee_7#01.50")],
  7: [c(885, 89, "gray", "icou", { wave: [[2, 45, 2, 3], [10, 45, 6, 3], [30, 45, 5, 3], [40, 45, 3, 3], [48, 45, 8, 3], [62, 45, 4, 3], [72, 45, 4, 3]] })],
  8: [
    c(625, 43, "blue", "ico", { wave: blips }), c(670, 129, "blue", "icoudlsee_"), c(799, 43, "blue", "ico", { wave: blips }),
    c(842, 43, "blue", "ic"), c(885, 45, "gray"), c(930, 44, "blue", "ico", { wave: blips }),
  ],
  9: [
    c(625, 34, "gray", undefined, { wave: [[0, 46, 22, 4]] }),
    c(659, 10, "gray", undefined, { tiny: true }), c(669, 10, "gray", undefined, { tiny: true }), c(679, 12, "gray", undefined, { tiny: true }),
    c(691, 10, "gray", undefined, { tiny: true }), c(701, 13, "gray", undefined, { tiny: true }),
    c(713, 86, "gray", "Inst", { wave: hits }), c(799, 86, "gray", "Inst", { wave: hits }), c(885, 89, "gray", "Inst", { wave: hits }),
  ],
  10: [c(539, 86, "gray", "Inst", { wave: [[4, 45, 4, 3], [16, 45, 2, 3], [28, 43, 2, 7], [40, 41, 2, 12], [50, 45, 2, 3], [60, 45, 4, 3], [72, 45, 4, 4], [80, 43, 2, 8]] })],
  11: [],
  12: [c(578, 59, "gray"), ...small, c(1103, 86, "blue", "icoudl"), c(1189, 245, "gray", "icoudlsee_7#01.48")],
  13: [c(628, 20, "gray", undefined, { bare: true }), c(704, 20, "gray", undefined, { bare: true })],
  14: [
    c(539, 86, "green", "Inst 1", { wave: notes }), c(713, 86, "green", undefined, { loop: true, wave: riff }),
    c(799, 86, "green", undefined, { loop: true, wave: riff }), c(885, 45, "green", undefined, { loop: true, wave: [[0, 43, 5, 5], [8, 46, 14, 4], [24, 45, 18, 4]] }),
    c(625, 88, "green", "Inst 1", { wave: riff }), c(974, 85, "gray", "Inst", { wave: notes }),
    c(1103, 43, "gray", undefined, { loop: true, wave: riff }), c(1146, 43, "gray", undefined, { loop: true, wave: riff }),
    c(1189, 43, "gray", undefined, { loop: true, wave: riff }), c(1232, 43, "gray", undefined, { loop: true, wave: riff }),
    c(1059, 44, "gray", "Inst 1", { spill: true, wave: riff }),
  ],
  15: [],
  16: [c(625, 174, "green", "Big Square", { wave: bass }), c(799, 175, "green", undefined, { loop: true, wave: loopBass })],
  17: [
    c(539, 86, "gray", "Inst", { wave: [[0, 44, 86, 6]] }), c(625, 174, "green", "Big Square", { wave: bass }),
    c(799, 175, "green", undefined, { loop: true, wave: loopBass }),
  ],
  18: [
    c(539, 86, "green", "Inst 4_"), c(625, 188, "gray", "Inst 4_bip.3", { wave: [[4, 46, 2, 2], [38, 46, 2, 3], [48, 46, 5, 3], [68, 46, 4, 3], [82, 46, 2, 2]] }),
    c(974, 85, "gray", "Inst"),
  ],
  19: [
    c(19, 44, "green", "Cl"), c(63, 42, "green", "Cl", { wave: [[0, 46, 18, 4], [20, 46, 2, 2]] }), c(105, 88, "green", "Classic", { wave: [[0, 46, 14, 4], [40, 46, 8, 4]] }),
    c(193, 172, "green", "intro"), c(365, 174, "green", "intro"),
    c(539, 44, "gray"), c(583, 42, "gray", undefined, { wave: [[0, 46, 16, 3], [20, 46, 2, 2]] }), c(625, 43, "gray", undefined, { wave: [[0, 46, 14, 3]] }),
    c(670, 43, "gray", undefined, { wave: [[0, 46, 3, 3]] }), c(713, 43, "gray"), c(756, 43, "gray", undefined, { wave: [[0, 46, 16, 3], [20, 46, 2, 2]] }),
    c(799, 86, "gray", "Cla", { wave: [[0, 46, 14, 4], [40, 46, 8, 4]] }),
  ],
};

const TONES: Record<Tone, string> = {
  gray: "bg-white/12 text-[#b4b4b4]",
  blue: "bg-[#3b71ad] text-[#eef4fb]",
  green: "bg-[#26a33a] text-[#e9fbeb]",
};

function ClipView({ clip, row }: { clip: Clip; row: number }) {
  const { x, w, tone, label, loop, tiny, bare, spill, wave } = clip;
  const line = tone === "gray" ? (loop ? "#6f736f" : "#9c9c9c") : tone === "blue" ? "#dbe7f5" : loop ? "#5fcb70" : "#bdf0c5";
  const dot = row === 6 || row === 7 || row === 8 || row === 12 ? "bg-[#84bdfd]" : "bg-[#6efb86]";
  if (tiny) {
    return (
      <div className="absolute top-0 h-[62px] border-2 border-black bg-white/12" style={{ left: x, width: w + 2 }}>
        <span className="absolute top-3 left-0 size-2 rounded-full bg-[#6efb86]" />
        <span className="absolute top-[42px] left-0.5 h-2.5 w-0.5 bg-[#9c9c9c]" />
        <span className="absolute top-[46px] left-0 h-0.5 w-full bg-[#9c9c9c]" />
      </div>
    );
  }
  const thick = row === 14 || row === 16 || row === 17;
  const hasLine = label !== "intro" && !loop && !thick;
  const wy0 = row === 7 || row === 8 ? 0 : -2;
  return (
    <div
      className={`absolute top-0 h-[62px] ${spill ? "" : "overflow-hidden"} border-2 border-black ${bare ? "rounded-[3px]" : "rounded-[9px]"} ${tone === "gray" && loop ? "bg-white/7" : TONES[tone]}`}
      style={{ left: x, width: w + 1 }}
    >
      {label === "intro" && (
        <>
          <span className="absolute top-9 right-0 left-0 h-2 bg-[#1f8030]" />
          <span className="absolute top-[46px] left-0 flex h-2 w-full gap-0.5">
            <span className="w-[42px] bg-[#1f8030]" />
            <span className="w-[42px] bg-[#1f8030]" />
            <span className="flex-1 bg-[#1f8030]" />
          </span>
        </>
      )}
      <svg width={w - 2} height="58" className="absolute top-0 left-0" fill={line}>
        {hasLine && <rect x="0" y="46" width={w - 5} height="2" />}
        {wave?.map(([wx, wy, ww, wh]) => (wx < w ? <rect key={wx} x={wx} y={wy + wy0} width={Math.min(ww, w - wx)} height={wh} /> : null))}
      </svg>
      {tone === "gray" && !loop && !bare && <span className={`absolute top-[10px] left-[9px] size-[18px] rounded-full ${dot}`} />}
      {label && (
        <span className={`absolute top-[5px] z-10 text-[22px] leading-[28px] whitespace-nowrap ${tone === "gray" ? "left-[39px] tracking-[0.250px]" : "left-[9px] font-semibold tracking-[-0.450px]"}`}>{label}</span>
      )}
    </div>
  );
}

/* Opens the border between a region and its loop repeats, leaving only the corner notches. */
const Seam = ({ clip }: { clip: Clip }) => (
  <span className={`absolute top-[9px] h-[44px] w-[3px] ${clip.tone === "green" ? "bg-[#26a33a]" : "bg-[#3c443d]"}`} style={{ left: clip.x - 1 }} />
);

function Ruler() {
  const bars = Array.from({ length: 33 }, (_, i) => i);
  return (
    <div className="flex h-[75px] flex-col bg-[#333]">
      <div className="relative h-[38px] border-b-2 border-[#1b1b1b]">
        <span className="absolute top-0 left-5 h-full w-[954px] bg-[#555]" />
        <svg width="20" height="36" className="absolute top-0 left-0"><path d="M2 2L16 14.500L2 27Z" fill="#5a5a5a" /></svg>
        {bars.filter((b) => b % 4 === 0).map((b) => (
          <span key={b} className="absolute top-[1px] text-[27px] leading-[30px] font-medium tracking-[-0.800px] text-[#dcdcdc]" style={{ left: ORIGIN + b * BAR + 6.5 }}>
            {b + 1}
          </span>
        ))}
      </div>
      <svg width="1450" height="37" className="-mt-8 h-[69px]" viewBox="0 -32 1450 69">
        {bars.map((b) => (
          <rect key={b} x={ORIGIN + b * BAR - 1} y={b % 4 === 0 ? -32 : 3} width="2" height={b % 4 === 0 ? 69 : 34} fill="#757575" />
        ))}
        {Array.from({ length: 134 }, (_, i) => i).filter((i) => i % 4).map((i) => (
          <rect key={i} x={Math.round(ORIGIN + (i * BAR) / 4) - 1} y="21" width="2" height="16" fill="#6a6a6a" />
        ))}
      </svg>
    </div>
  );
}

function Arrange() {
  const bars = Array.from({ length: 34 }, (_, i) => i);
  return (
    <div className="relative flex flex-1 flex-col overflow-hidden bg-[#2e2e2e]">
      <Ruler />
      {TRACKS.map((t) => (
        <div key={t.n} className={`relative h-16 border-b-2 ${t.n === 11 ? "border-[#262e27] bg-[#303a31]" : t.nested ? "border-[#232a24] bg-[#2b342c]" : "border-[#252525]"}`}>
          <svg width="1450" height="64" className="absolute top-0 left-0">
            {bars.map((b) => <rect key={b} x={ORIGIN + b * BAR - 1} width="2" height="64" fill="#fff" opacity=".1" />)}
          </svg>
          {t.n === 11 && <span className="absolute top-4 left-[22px] text-[23px] leading-[32px] font-bold tracking-[-0.800px] text-[#b4f8bf]">meat</span>}
          {CLIPS[t.n].map((clip) => <ClipView key={clip.x} clip={clip} row={t.n} />)}
          {CLIPS[t.n].filter((clip) => clip.loop).map((clip) => <Seam key={clip.x} clip={clip} />)}
        </div>
      ))}
      <svg width="40" height="1150" className="absolute top-[38px] left-[649px] z-20">
        <path d="M3 4C3 2 4 1 6 1H34C36 1 37 2 37 4V18L20 36L3 18Z" fill="#a8a8a8" stroke="#222" strokeWidth="1" />
        <rect x="19" y="7" width="2.200" height="1150" fill="#fff" />
      </svg>
    </div>
  );
}

/* ---------- app ---------- */

export default function App() {
  return (
    <div className="flex h-[2784px] w-[1658px] items-center justify-center overflow-hidden bg-white">
      <div className="h-[1658px] w-[2784px] shrink-0 -rotate-90 pt-[76px] pl-[112px] font-['Inter','Liberation_Sans',sans-serif] leading-none">
        <div className="flex h-[1434px] w-[2560px] flex-col overflow-hidden rounded-[22px] bg-[#565656] shadow-[0_0_2px_1px_rgba(0,0,0,0.35),0_36px_70px_rgba(0,0,0,0.48)]">
          <Toolbar />
          <div className="flex flex-1">
            <Inspector />
            <div className="flex flex-1 flex-col">
              <MenuBar />
              <div className="flex flex-1">
                <TrackPanel />
                <Arrange />
              </div>
            </div>
          </div>
        </div>
      </div>
    </div>
  );
}
